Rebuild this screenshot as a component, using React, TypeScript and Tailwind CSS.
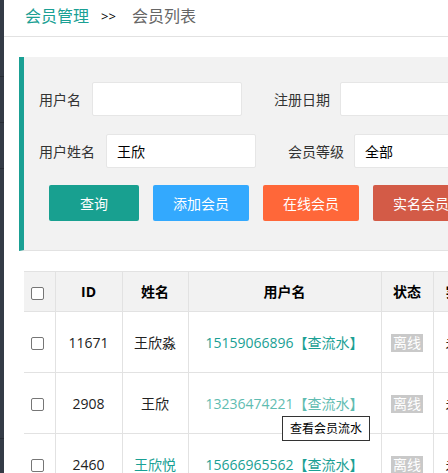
import React from 'react';

const FONT = { fontFamily: '"Open Sans", "Noto Sans CJK SC", "Noto Sans", sans-serif' };

type Member = { id: number; name: string; user: string; nameLink?: boolean; hover?: boolean };

const members: Member[] = [
  { id: 11671, name: '王欣淼', user: '15159066896' },
  { id: 2908, name: '王欣', user: '13236474221', hover: true },
  { id: 2460, name: '王欣悦', user: '15666965562', nameLink: true },
];

// fake native checkbox
const Check = () => (
  <span className="inline-block h-[13px] w-[13px] rounded-[2px] border border-[#767676] bg-white align-middle" />
);

const Field = ({ label, value, gap }: { label: string; value?: string; gap: string }) => (
  <div className="flex items-center">
    <span className={`text-[14px] text-[#333] ${gap}`}>{label}</span>
    <div className="flex h-[34px] w-[150px] items-center rounded-[2px] border border-[#e6e6e6] bg-white px-[10px] text-[14px] text-black">
      {value}
    </div>
  </div>
);

export default function App() {
  return (
    <div className="flex h-[473px] w-[448px] overflow-hidden bg-white" style={FONT}>
      {/* sidebar edge */}
      <div className="flex w-[4px] shrink-0 flex-col bg-[#343b46]">
        <div className="mt-[76px] h-px bg-[#282d35]" />
        <div className="mt-[45px] h-px bg-[#282d35]" />
        <div className="mt-[45px] h-px bg-[#282d35]" />
        <div className="mt-[269px] h-px bg-[#282d35]" />
      </div>

      <div className="min-w-0 flex-1 overflow-hidden">
        {/* breadcrumb */}
        <div className="flex h-[37px] items-start whitespace-nowrap border-b border-[#e2e2e2] pl-[21px] pt-[5px] text-[16px] leading-[22px]">
          <span className="text-[#1aa094]">会员管理</span>
          <span className="ml-[12px] text-[13px] text-black">&gt;&gt;</span>
          <span className="ml-[16px] text-[#666]">会员列表</span>
        </div>

        {/* search panel */}
        <div className="ml-[15px] mt-[20px] w-[600px] border-b border-l-[5px] border-b-[#e2e2e2] border-l-[#1aa094] bg-[#f2f2f2] pb-[29px] pl-[15px] pt-[25px]">
          <div className="flex items-center whitespace-nowrap">
            <Field label="用户名" gap="mr-[11px]" />
            <div className="ml-[32px]">
              <Field label="注册日期" gap="mr-[10px]" />
            </div>
          </div>
          <div className="mt-[18px] flex items-center whitespace-nowrap">
            <Field label="用户姓名" value="王欣" gap="mr-[11px]" />
            <div className="ml-[32px]">
              <Field label="会员等级" value="全部" gap="mr-[10px]" />
            </div>
          </div>
          <div className="ml-[10px] mt-[17px] flex gap-[14px] whitespace-nowrap text-[14px] text-white">
            <button className="h-[36px] w-[90px] rounded-[2px] bg-[#18a090]">查询</button>
            <button className="h-[36px] w-[96px] rounded-[2px] bg-[#33a9fe]">添加会员</button>
            <button className="h-[36px] w-[96px] rounded-[2px] bg-[#ff6739]">在线会员</button>
            <button className="h-[36px] w-[96px] rounded-[2px] bg-[#d35b47]">实名会员</button>
          </div>
        </div>

        {/* table */}
        <div className="relative ml-[20px] mt-[20px] w-[520px]">
          <table className="w-[520px] table-fixed border-collapse text-[14px] text-[#222]">
            <colgroup>
              <col className="w-[31px]" />
              <col className="w-[67px]" />
              <col className="w-[66px]" />
              <col className="w-[193px]" />
              <col className="w-[52px]" />
              <col />
            </colgroup>
            <thead>
              <tr className="h-[40px] border-y border-[#e2e2e2] bg-[#f2f2f2] font-bold text-black">
                <th className="pl-[7px] text-left font-normal"><Check /></th>
                <th className="border-l border-[#e2e2e2]">ID</th>
                <th className="border-l border-[#e2e2e2]">姓名</th>
                <th className="border-l border-[#e2e2e2]">用户名</th>
                <th className="border-l border-[#e2e2e2]">状态</th>
                <th className="border-l border-[#e2e2e2] pl-[12px] text-left">实名</th>
              </tr>
            </thead>
            <tbody>
              {members.map((m) => (
                <tr key={m.id} className="h-[61px] border-b border-[#e2e2e2]">
                  <td className="pl-[7px]"><Check /></td>
                  <td className="border-l border-[#e2e2e2] text-center">{m.id}</td>
                  <td className={`border-l border-[#e2e2e2] text-center ${m.nameLink ? 'text-[#1aa094]' : ''}`}>{m.name}</td>
                  <td className={`whitespace-nowrap border-l border-[#e2e2e2] text-center ${m.hover ? 'text-[#5fbcb1]' : 'text-[#1aa094]'}`}>
                    {m.user}【查流水】
                  </td>
                  <td className="border-l border-[#e2e2e2] text-center">
                    <span className="inline-block h-[18px] bg-[#c9c9c9] px-[2px] text-[14px] leading-[18px] text-white">离线</span>
                  </td>
                  <td className="whitespace-nowrap border-l border-[#e2e2e2] pl-[12px] text-left">未实名</td>
                </tr>
              ))}
            </tbody>
          </table>

          {/* hover tooltip */}
          <div className="absolute left-[258px] top-[145px] whitespace-nowrap border border-[#333] bg-white px-[7px] py-[4px] text-[12px] leading-[15px] text-black">
            查看会员流水
          </div>
        </div>
      </div>
    </div>
  );
}
